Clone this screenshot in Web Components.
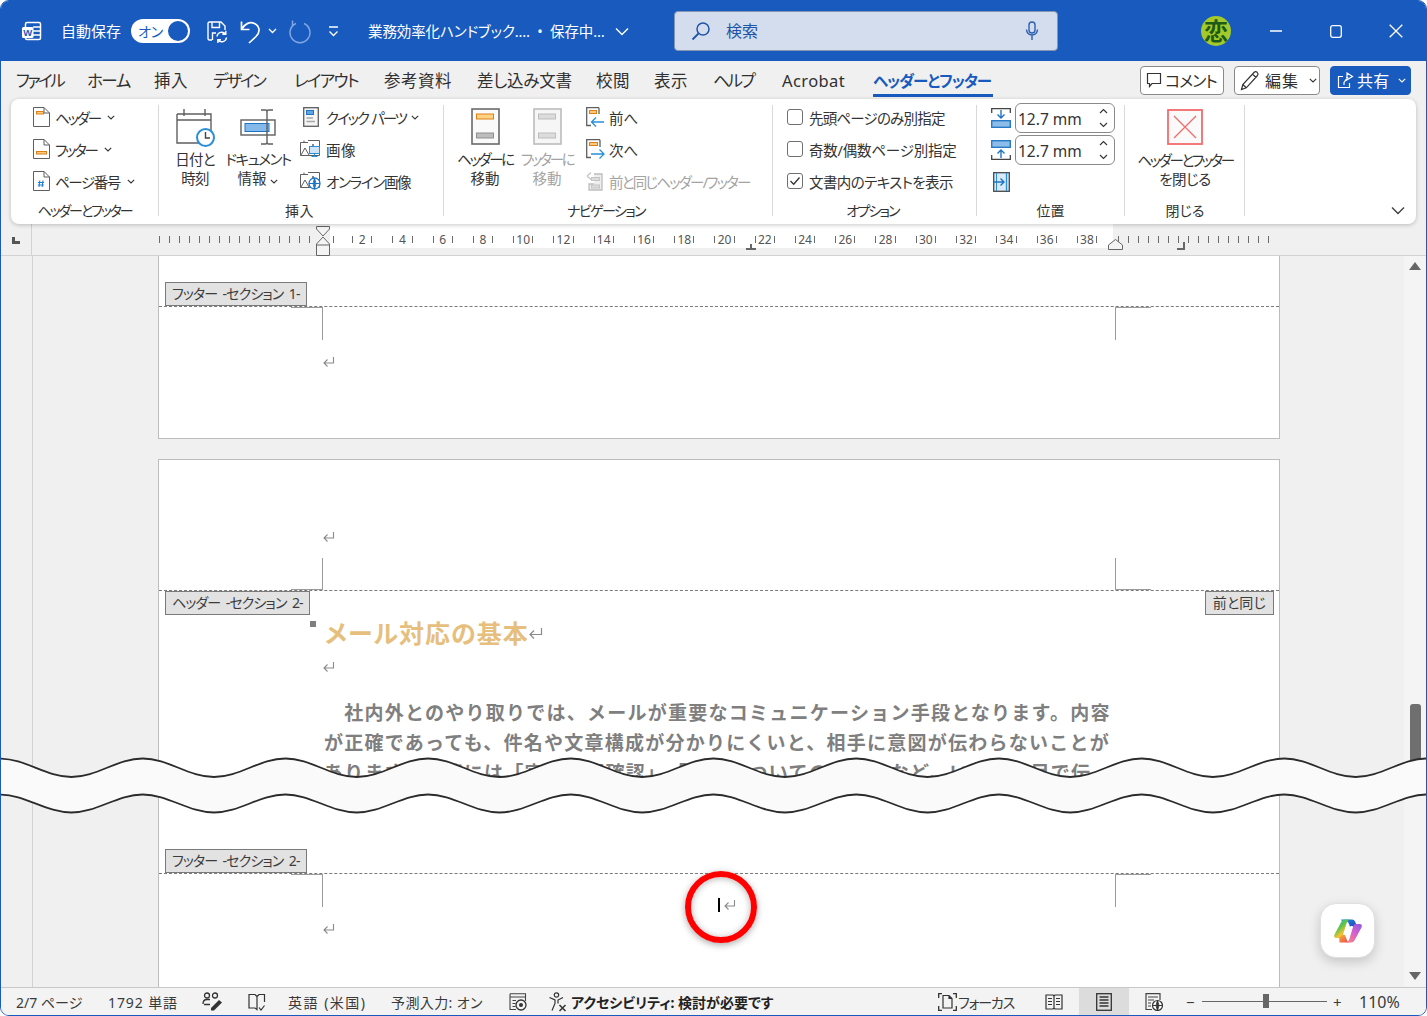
<!DOCTYPE html>
<html lang="ja">
<head>
<meta charset="utf-8">
<title>Word</title>
<style>
  html, body { margin: 0; padding: 0; background: #fff; }
  body { font-family: "Noto Sans", "Noto Sans CJK JP", sans-serif; font-feature-settings: "palt"; }
</style>
</head>
<body>
<word-app></word-app>

<script>
const GR = '#5f5f5f';
const pageShape = (s, f) => `<path d="M.5.5H11L16.5 6V19.5H.5Z" fill="${f}" stroke="${s}"/><path d="M11 .5V6H16.5" fill="none" stroke="${s}"/>`;
const frame = `<path d="M8 .5H19.5V15.5H.5V2.5M.5 2.5H8M4 .5V2" fill="#fff" stroke="${GR}"/><path d="M1 15L5 8L9 15" fill="none" stroke="${GR}"/><circle cx="13" cy="5" r="1" fill="${GR}"/>`;

// every icon is [width, height, svg content]
const ICONS = {
  word: [24, 24, `<path d="M8 3.5H20a1.5 1.5 0 0 1 1.500 1.500V19a1.500 1.500 0 0 1-1.500 1.500H8a1.500 1.500 0 0 1-1.500-1.500V5A1.500 1.500 0 0 1 8 3.500Z" fill="none" stroke="#fff" stroke-width="1.500"/><path d="M14 8H21M14 12H21M14 16H21" stroke="#fff" stroke-width="1.300"/><rect x="3" y="8" width="11.500" height="11" rx="1.500" fill="#fff"/><text x="8.700" y="17" font-size="9.500" font-weight="700" font-family="Liberation Sans" text-anchor="middle" fill="#185abd">W</text>`],
  save: [23, 24, `<path d="M7 21H4.500A1.500 1.500 0 0 1 3 19.500V4.500A1.500 1.500 0 0 1 4.500 3H16L20 7V11" fill="none" stroke="#fff" stroke-width="1.400"/><path d="M7 3V8.500H14.500V3M7.500 21V14H11" fill="none" stroke="#fff" stroke-width="1.400"/><path d="M12 17.500A4.800 4.800 0 0 1 20.500 15M21.500 18.500A4.800 4.800 0 0 1 13 21M20.800 11.800V15.300H17.300M12.800 24V20.700H16" fill="none" stroke="#fff" stroke-width="1.400"/>`],
  undo: [21, 25, `<path d="M1.500 2.500V10.500H9.500M1.800 10C5 4.500 10 2.300 14.500 4.500C20 7.500 20.500 13 16 17.500L9 24" fill="none" stroke="#fff" stroke-width="1.700"/>`],
  redo: [22, 25, `<path d="M7 4.500A10 10 0 1 0 15 4.500M3.500 1.500V7" fill="none" stroke="#82a6e2" stroke-width="1.500"/>`],
  custom: [11, 12, `<path d="M1 2H10M1.500 6.500L5.500 10.500L9.500 6.500" fill="none" stroke="#fff" stroke-width="1.300"/>`],
  chevW: [9, 6, `<path d="M1 1L4.500 4.500L8 1" fill="none" stroke="#fff" stroke-width="1.300"/>`],
  chevTitle: [14, 9, `<path d="M1 1.500L7 7.500L13 1.500" fill="none" stroke="#fff" stroke-width="1.400"/>`],
  glass: [20, 20, `<circle cx="12" cy="8" r="6" fill="none" stroke="#1f55a8" stroke-width="1.500"/><path d="M7.500 12.500L1.500 18.500" stroke="#1f55a8" stroke-width="1.800"/>`],
  mic: [14, 20, `<rect x="4" y="1" width="6" height="11" rx="3" fill="none" stroke="#2d5fae" stroke-width="1.400"/><path d="M1.500 8.500A5.500 5.500 0 0 0 12.500 8.500M7 14V19" fill="none" stroke="#2d5fae" stroke-width="1.400"/>`],
  winMin: [12, 2, `<path d="M0 1H12" stroke="#fff" stroke-width="1.300"/>`],
  winMax: [12, 13, `<rect x=".7" y=".7" width="10.600" height="11.600" rx="2" fill="none" stroke="#fff" stroke-width="1.300"/>`],
  winClose: [14, 14, `<path d="M.7.700L13.300 13.300M13.300.700L.7 13.300" stroke="#fff" stroke-width="1.300"/>`],
  comment: [16, 16, `<path d="M1.500 1.500H14.500V11.500H6L3.500 14.500V11.500H1.500Z" fill="none" stroke="#333" stroke-width="1.200"/>`],
  pencil: [20, 21, `<path d="M1.500 19.500L2.800 14.500L14 2.500Q15.500 1 17.200 2.300Q18.800 4 17.500 5.500L6.300 17.800ZM12.500 4L16 7.500M2.800 14.500L6.300 17.800" fill="none" stroke="#333" stroke-width="1.200"/>`],
  share: [17, 17, `<path d="M6 4.500H1.500V15.500H12.500V11M9 5.500H10.500L7 10.500V13M9 8.500L15.500 4.500L10 1V8.500" fill="none" stroke="#fff" stroke-width="1.200"/>`],
  chevS: [8, 5, `<path d="M.8.800L4 4L7.200.800" fill="none" stroke="#333" stroke-width="1.100"/>`],
  chevSW: [8, 5, `<path d="M.8.800L4 4L7.200.800" fill="none" stroke="#fff" stroke-width="1.100"/>`],
  hdr: [17, 20, pageShape(GR, '#fff') + `<rect x="3.500" y="4.500" width="7" height="2.500" fill="#f8c981" stroke="#dd7f14"/>`],
  ftr: [17, 20, pageShape(GR, '#fff') + `<rect x="3.500" y="12.500" width="10" height="2.500" fill="#f8c981" stroke="#dd7f14"/>`],
  pgnum: [17, 20, pageShape(GR, '#fff') + `<path d="M6.800 9.500L6 16M10 9.500L9.200 16M5 11.500H11M4.800 14H10.800" stroke="#1f7fd0" stroke-width="1.100" fill="none"/>`],
  cal: [39, 40, `<g transform="translate(0 -2)"><path d="M1 8H35V32M1 8V37H23M1 14H35M8 3V10M29 3V10" fill="none" stroke="${GR}" stroke-width="1.400"/><circle cx="29.500" cy="31.500" r="8.500" fill="#fff" stroke="#2b8fd8" stroke-width="2"/><path d="M29.500 26V32H34" fill="none" stroke="#444" stroke-width="1.400"/></g>`],
  docinfo: [37, 38, `<rect x="1" y="12" width="34" height="15" fill="none" stroke="${GR}" stroke-width="1.400"/><rect x="5" y="15.500" width="24" height="8" fill="#85b9ea" stroke="#1e74c4"/><path d="M21 2H25.500Q27 2 27 4V34Q27 36 25.500 36H21M33 2H28.500Q27 2 27 4M33 36H28.500Q27 36 27 34" fill="none" stroke="${GR}" stroke-width="1.400"/>`],
  quick: [16, 20, `<rect x=".7" y=".7" width="14.600" height="18.600" fill="#f5f5f5" stroke="${GR}" stroke-width="1.300"/><rect x="3.500" y="3.500" width="7" height="4" fill="#5ea6e2" stroke="#1e74c4"/><path d="M3.500 11H10M3.500 14.500H12" stroke="#a8a8a8" stroke-width="1.600"/>`],
  image: [21, 18, frame + `<rect x="9.500" y="6.500" width="10" height="7" fill="#cfe4f7" stroke="#2b8fd8"/><path d="M14.500 13.500V16.500M11.500 16.500H17.500" stroke="#2b8fd8"/>`],
  online: [21, 18, frame + `<circle cx="14.500" cy="11.500" r="5.500" fill="#fff" stroke="#1e74c4" stroke-width="1.300"/><path d="M9 11.500H20M14.500 6V17M14.500 6Q11.500 11.500 14.500 17Q17.500 11.500 14.500 6" fill="none" stroke="#1e74c4"/>`],
  goHdr: [29, 37, `<rect x="1" y="1" width="27" height="35" fill="#fafafa" stroke="#6a6a6a" stroke-width="1.600"/><rect x="5.500" y="6" width="17" height="5" fill="#fdd383" stroke="#de8015"/><rect x="5.500" y="25" width="17" height="5" fill="#bdbdbd" stroke="#8f8f8f"/>`],
  goFtr: [29, 37, `<rect x="1" y="1" width="27" height="35" fill="#f6f6f6" stroke="#bcbcbc" stroke-width="1.600"/><rect x="5.500" y="6" width="17" height="5" fill="#dcdcdc" stroke="#bdbdbd"/><rect x="5.500" y="25" width="17" height="5" fill="#dcdcdc" stroke="#bdbdbd"/>`],
  prev: [19, 20, `<path d="M13 .7H.7V18.500H5M13 .7V7" fill="none" stroke="${GR}" stroke-width="1.300"/><rect x="3.500" y="3.500" width="7" height="3" fill="#f8c981" stroke="#dd7f14"/><path d="M18 15H6M10 10.500L5.500 15L10 19.500" fill="none" stroke="#2b8fd8" stroke-width="1.300"/>`],
  next: [19, 20, `<path d="M14 .7H.7V18.500H5M14 .7V8" fill="none" stroke="${GR}" stroke-width="1.300"/><rect x="3.500" y="3.500" width="8" height="3" fill="#f8c981" stroke="#dd7f14"/><path d="M5 15H17.500M13.500 10.500L18 15L13.500 19.500" fill="none" stroke="#2b8fd8" stroke-width="1.300"/>`],
  same: [17, 20, `<path d="M8 3H16V19H3V13H8" fill="#eee" stroke="#bdbdbd" stroke-width="1.300"/><rect x="5.500" y="6.500" width="8" height="3" fill="#dcdcdc" stroke="#c4c4c4"/><rect x="5.500" y="14" width="8" height="3" fill="#dcdcdc" stroke="#c4c4c4"/><path d="M1 5L5 1.500M1 5L5 8.500" stroke="#c4c4c4" fill="none" stroke-width="1.200"/>`],
  topDist: [20, 20, `<path d="M.7 5V.7H19.300V5" fill="none" stroke="#444" stroke-width="1.300"/><path d="M10 2V10M6.500 6.500L10 10L13.500 6.500" fill="none" stroke="#1e74c4" stroke-width="1.400"/><rect x=".7" y="12.700" width="18.600" height="6.600" fill="#8cbcea" stroke="#1e74c4" stroke-width="1.300"/>`],
  botDist: [20, 20, `<rect x=".7" y=".7" width="18.600" height="6.600" fill="#8cbcea" stroke="#1e74c4" stroke-width="1.300"/><path d="M10 18V10M6.500 13.500L10 10L13.500 13.500" fill="none" stroke="#1e74c4" stroke-width="1.400"/><path d="M.7 15V19.300H19.300V15" fill="none" stroke="#444" stroke-width="1.300"/>`],
  alignTab: [17, 20, `<rect x=".7" y=".7" width="15.600" height="18.600" fill="#d9e9f8" stroke="#4a4a4a" stroke-width="1.300"/><path d="M3.500 1V19" stroke="#2b8fd8"/><path d="M13.500 1V19" stroke="#2b8fd8" stroke-width="1.300"/><path d="M1 10H11M7.500 6.500L11 10L7.500 13.500" fill="none" stroke="#1e74c4" stroke-width="1.400"/>`],
  closeX: [36, 36, `<rect x="1" y="1" width="34" height="34" fill="#fafafa" stroke="#f26c6c" stroke-width="1.800"/><path d="M7 7L29 29M29 7L7 29" stroke="#f26c6c" stroke-width="1.300"/>`],
  check: [12, 10, `<path d="M1.500 5L4.700 8.200L10.500 1.500" fill="none" stroke="#333" stroke-width="1.300"/>`],
  spinUp: [9, 6, `<path d="M1 5L4.500 1.500L8 5" fill="none" stroke="#333" stroke-width="1.100"/>`],
  spinDown: [9, 6, `<path d="M1 1L4.500 4.500L8 1" fill="none" stroke="#333" stroke-width="1.100"/>`],
  ret: [13, 12, `<path d="M11.500 1V7H2M5.500 3.500L2 7L5.500 10.500" fill="none" stroke="#8a8a8a" stroke-width="1.100"/>`],
  retBig: [15, 13, `<path d="M13.500 1V7.500H2M6 3.500L2 7.500L6 11.500" fill="none" stroke="#8a8a8a" stroke-width="1.200"/>`],
  proof: [21, 19, `<circle cx="5" cy="3.500" r="2.500" fill="none" stroke="#333" stroke-width="1.300"/><circle cx="13" cy="3.500" r="2.500" fill="none" stroke="#333" stroke-width="1.300"/><path d="M1 12Q1 7.500 5 7.500H8M2 12.500H8" fill="none" stroke="#333" stroke-width="1.300"/><path d="M9 16L17 8L20 10.500L12 18.500H9Z" fill="#333"/>`],
  book: [18, 18, `<path d="M1 1.500H7L9 3.500V16.500L7 15H1ZM9 3.500L11 1.500H16.500V9M11 14.500L13 17L16.500 12.500" fill="none" stroke="#333" stroke-width="1.200"/>`],
  macro: [18, 18, `<path d="M1 .7H16.500V8M1 .7V16.500H7M1 4H16.500M3.500 7.500H7M3.500 10.500H6.500M3.500 13.500H6.500" fill="none" stroke="#444" stroke-width="1.100"/><circle cx="12" cy="12" r="5" fill="none" stroke="#333" stroke-width="1.300"/><circle cx="12" cy="12" r="2" fill="#333"/>`],
  access: [20, 20, `<circle cx="8.500" cy="3" r="2.200" fill="none" stroke="#333" stroke-width="1.200"/><path d="M1.500 5.500L7 8V11.500L4 18.500M15 5.500L10 8V11.500" fill="none" stroke="#333" stroke-width="1.200"/><path d="M11.500 13L17.500 19M17.500 13L11.500 19" stroke="#333" stroke-width="1.500"/>`],
  focus: [19, 18, `<path d="M.7 5V.7H4M15 .7H18.300V5M.7 13V17.300H4M15 17.300H18.300V13" fill="none" stroke="#333" stroke-width="1.300"/><path d="M5 2.500H11L14 5.500V15H5ZM11 2.500V5.500H14" fill="none" stroke="#333" stroke-width="1.200"/>`],
  read: [18, 16, `<path d="M1 1H8L9 2L10 1H17V15H10L9 14L8 15H1ZM9 2V14M3 4.500H7M3 7.500H7M3 10.500H7M11 4.500H15M11 7.500H15M11 10.500H15" fill="none" stroke="#333" stroke-width="1.200"/>`],
  print: [16, 18, `<rect x=".7" y=".7" width="14.600" height="16.600" fill="none" stroke="#333" stroke-width="1.300"/><path d="M3.500 4H12.500M3.500 7H12.500M3.500 10H12.500M3.500 13H12.500" stroke="#333" stroke-width="1.300"/>`],
  web: [18, 18, `<path d="M7 16.500H1V.7H15V7M3 4H13M3 7H9M3 10H6M3 13H6" fill="none" stroke="#444" stroke-width="1.200"/><circle cx="12.500" cy="12.500" r="5" fill="#fff" stroke="#333" stroke-width="1.200"/><path d="M7.500 12.500H17.500M12.500 7.500V17.500M12.500 7.500Q9.500 12.500 12.500 17.500Q15.500 12.500 12.500 7.500" fill="none" stroke="#333"/>`],
  copilot: [30, 28, `<defs>
    <linearGradient id="cl" x1="0" y1="0" x2=".7" y2="1"><stop offset="0" stop-color="#1fb6c9"/><stop offset=".45" stop-color="#5fc24a"/><stop offset=".75" stop-color="#f4c534"/><stop offset="1" stop-color="#f0643c"/></linearGradient>
    <linearGradient id="cr" x1="1" y1="0" x2=".2" y2="1"><stop offset="0" stop-color="#8a5ae0"/><stop offset=".5" stop-color="#d25fd0"/><stop offset="1" stop-color="#f7808a"/></linearGradient>
    <linearGradient id="ct" x1="0" y1="0" x2="1" y2="1"><stop offset="0" stop-color="#1b8fe0"/><stop offset="1" stop-color="#2a3fc0"/></linearGradient>
    <linearGradient id="cb" x1="0" y1="0" x2="1" y2="1"><stop offset="0" stop-color="#f7b12e"/><stop offset="1" stop-color="#e8455a"/></linearGradient>
  </defs>
  <path d="M8 2.500H19Q21.500 2.500 22.500 5.500L24 10H17Q15.500 4 13 4Q11 4 10.300 6.500Z" fill="url(#ct)"/>
  <path d="M6.500 25.500H17Q14.500 25.500 13.600 22L12 18H6Z" fill="url(#cb)"/>
  <path d="M8.500 4.500Q9.500 2.500 12 2.500H17Q14.500 3 13.500 6.500L9.700 19Q9 21 7 21H3.500Q.5 21 1.300 18Z" fill="url(#cl)"/>
  <path d="M21.500 23.500Q20.500 25.500 18 25.500H13Q15.500 25 16.500 21.500L20.300 9Q21 7 23 7H26.500Q29.500 7 28.700 10Z" fill="url(#cr)"/>
  <path d="M17.500 9H20L15.500 20H12.500Z" fill="#fff"/>`]
};

class AppIcon extends HTMLElement {
  connectedCallback() {
    const [w, h, body] = ICONS[this.getAttribute('name')];
    this.attachShadow({ mode: 'open' });
    this.shadowRoot.innerHTML = `
      <style>:host { display: inline-flex; flex: none; line-height: 0; } svg { display: block; }</style>
      <svg width="${w}" height="${h}" viewBox="0 0 ${w} ${h}">${body}</svg>`;
  }
}

class TitleBar extends HTMLElement {
  connectedCallback() {
    this.attachShadow({ mode: 'open' });
    this.shadowRoot.innerHTML = `
      <style>
        :host { display: flex; align-items: center; height: 60px; background: #185abd; color: #fff; font-size: 15px; padding-left: 18px; flex: none; white-space: nowrap; }
        .auto { margin-left: 18px; width: 60px; padding-bottom: 2px; }
        .toggle { margin-left: 10px; width: 59px; height: 24px; border-radius: 12px; background: #fff; box-sizing: border-box; padding: 0 2px 0 7px; display: flex; align-items: center; justify-content: space-between; color: #185abd; font-size: 14px; }
        .dot { width: 20px; height: 20px; border-radius: 50%; background: #185abd; }
        .title { margin-left: 29px; width: 242px; font-size: 14.5px; letter-spacing: -.1px; padding-bottom: 2px; }
        .search { margin-left: 45px; width: 384px; height: 40px; box-sizing: border-box; background: #d3dded; border: 1px solid #8596b2; border-radius: 4px; display: flex; align-items: center; padding: 0 18px 0 16px; color: #1f55a8; font-size: 16px; }
        .search span { margin-left: 15px; flex: 1; padding-bottom: 2px; }
        .avatar { margin-left: 143px; width: 30px; height: 30px; border-radius: 50%; background: #a3c92a; color: #1c5a18; font-size: 24px; font-weight: 700; line-height: 29px; text-align: center; }
        .win { width: 60px; height: 40px; display: flex; align-items: center; justify-content: center; }
      </style>
      <app-icon name="word"></app-icon>
      <span class="auto">自動保存</span>
      <div class="toggle">オン<div class="dot"></div></div>
      <app-icon name="save" style="margin-left:15px"></app-icon>
      <app-icon name="undo" style="margin-left:12px"></app-icon>
      <app-icon name="chevW" style="margin-left:7px"></app-icon>
      <app-icon name="redo" style="margin-left:12px"></app-icon>
      <app-icon name="custom" style="margin-left:17px"></app-icon>
      <span class="title">業務効率化ハンドブック.… &nbsp;•&nbsp; 保存中…</span>
      <app-icon name="chevTitle" style="margin-left:5px"></app-icon>
      <div class="search"><app-icon name="glass"></app-icon><span>検索</span><app-icon name="mic"></app-icon></div>
      <div class="avatar">恋</div>
      <div class="win" style="margin-left:15px"><app-icon name="winMin"></app-icon></div>
      <div class="win"><app-icon name="winMax"></app-icon></div>
      <div class="win"><app-icon name="winClose"></app-icon></div>`;
  }
}

class TabStrip extends HTMLElement {
  connectedCallback() {
    const tabs = [['ファイル', 71, -2.500], ['ホーム', 67, -1.500], ['挿入', 59, .4], ['デザイン', 81, -2.200], ['レイアウト', 90, -1.600], ['参考資料', 93, .5], ['差し込み文書', 119, -.2], ['校閲', 58, .5], ['表示', 59, .5], ['ヘルプ', 69, -2.200], ['Acrobat', 91, .4]];
    this.attachShadow({ mode: 'open' });
    this.shadowRoot.innerHTML = `
      <style>
        :host { display: flex; align-items: center; height: 38px; background: #f0f0f0; color: #303030; font-size: 16.500px; padding-left: 15px; flex: none; white-space: nowrap; box-sizing: border-box; }
        .tab { flex: none; }
        .active { width: 120px; color: #185abd; font-weight: 700; font-size: 15.500px; letter-spacing: -1px; height: 33px; line-height: 35px; box-sizing: border-box; border-bottom: 3px solid #185abd; }
        .btn { height: 29px; box-sizing: border-box; border: 1px solid #8a8a8a; border-radius: 4px; background: #fff; display: flex; align-items: center; font-size: 16px; }
        .comment { margin-left: 147px; width: 84px; padding-left: 5px; gap: 3px; letter-spacing: -1px; }
        .edit { margin-left: 10px; width: 86px; padding-left: 5px; gap: 5px; letter-spacing: 1px; }
        .share { margin-left: 10px; width: 81px; padding-left: 6px; gap: 3px; background: #185abd; border-color: #185abd; color: #fff; letter-spacing: .3px; }
        .edit app-icon:last-child, .share app-icon:last-child { margin-left: 5px; }
      </style>
      ${tabs.map(([t, w, ls]) => `<span class="tab" style="width:${w}px;letter-spacing:${ls}px">${t}</span>`).join('')}
      <span class="tab active">ヘッダーとフッター</span>
      <div class="btn comment"><app-icon name="comment"></app-icon>コメント</div>
      <div class="btn edit"><app-icon name="pencil"></app-icon>編集<app-icon name="chevS"></app-icon></div>
      <div class="btn share"><app-icon name="share"></app-icon>共有<app-icon name="chevSW"></app-icon></div>`;
  }
}

class RibbonGroup extends HTMLElement {
  connectedCallback() {
    this.attachShadow({ mode: 'open' });
    this.shadowRoot.innerHTML = `
      <style>
        :host { display: grid; grid-template-rows: 93px 18px; flex: none; box-sizing: border-box; height: 111px; border-right: 1px solid #d9d9d9; }
        .body { margin-top: -4px; display: flex; height: 97px; }
        .label { height: 26px; line-height: 26px; text-align: center; font-size: 14px; color: #333; letter-spacing: ${this.getAttribute('ls') || 0}px; padding-right: ${this.getAttribute('shift') || 0}px; }
      </style>
      <div class="body"><slot></slot></div>
      <div class="label">${this.getAttribute('label')}</div>`;
  }
}

class SmallBtn extends HTMLElement {
  connectedCallback() {
    const off = this.hasAttribute('disabled');
    const gap = this.getAttribute('gap') || 5;
    const chev = this.hasAttribute('chev') ? `<app-icon name="chevS" style="margin-left:${this.getAttribute('chev') || 7}px"></app-icon>` : '';
    this.attachShadow({ mode: 'open' });
    this.shadowRoot.innerHTML = `
      <style>
        :host { display: flex; align-items: center; height: 32px; white-space: nowrap; font-size: 14.500px; color: ${off ? '#a3a3a3' : '#333'}; }
        .txt { margin-left: ${gap}px; }
      </style>
      <app-icon name="${this.getAttribute('icon')}"></app-icon><span class="txt"><slot></slot></span>${chev}`;
  }
}

class LargeBtn extends HTMLElement {
  connectedCallback() {
    const off = this.hasAttribute('disabled');
    this.attachShadow({ mode: 'open' });
    this.shadowRoot.innerHTML = `
      <style>
        :host { display: flex; flex-direction: column; align-items: center; flex: none; white-space: nowrap; font-size: 14.500px; line-height: 19px; text-align: center; color: ${off ? '#a3a3a3' : '#333'}; }
        .ico { height: 49px; padding-top: 7px; box-sizing: border-box; display: flex; justify-content: center; }
      </style>
      <div class="ico"><app-icon name="${this.getAttribute('icon')}"></app-icon></div>
      <slot></slot>`;
  }
}

class CheckRow extends HTMLElement {
  connectedCallback() {
    this.attachShadow({ mode: 'open' });
    this.shadowRoot.innerHTML = `
      <style>
        :host { display: flex; align-items: center; height: 32px; white-space: nowrap; font-size: 14.500px; color: #333; }
        .box { width: 16px; height: 16px; box-sizing: border-box; border: 1px solid #707070; border-radius: 3px; margin-right: 6px; display: flex; align-items: center; justify-content: center; }
      </style>
      <div class="box">${this.hasAttribute('checked') ? '<app-icon name="check"></app-icon>' : ''}</div><slot></slot>`;
  }
}

class SpinBox extends HTMLElement {
  connectedCallback() {
    this.attachShadow({ mode: 'open' });
    this.shadowRoot.innerHTML = `
      <style>
        :host { display: flex; align-items: center; width: 100px; height: 30px; box-sizing: border-box; margin-left: 4px; border: 1px solid #8a8a8a; border-radius: 6px; font-size: 15.500px; color: #333; padding: 0 6px 0 2px; justify-content: space-between; }
        span { padding-top: 1px; }
        .arrows { display: flex; flex-direction: column; gap: 8px; }
      </style>
      <span>12.7 mm</span>
      <div class="arrows"><app-icon name="spinUp"></app-icon><app-icon name="spinDown"></app-icon></div>`;
  }
}

class RibbonBar extends HTMLElement {
  connectedCallback() {
    this.attachShadow({ mode: 'open' });
    this.shadowRoot.innerHTML = `
      <style>
        :host { display: flex; flex: none; position: relative; z-index: 2; height: 125px; box-sizing: border-box; margin: 0 10px; background: #fff; border-radius: 8px; padding: 6px 0 8px; box-shadow: 0 1px 4px rgba(0,0,0,.22); }
        .col { display: flex; flex-direction: column; }
        .more { margin-left: auto; align-self: flex-end; margin-right: 11px; margin-bottom: 1px; }
        .row { display: flex; align-items: center; height: 32px; }
      </style>
      <ribbon-group label="ヘッダーとフッター" ls="-2.100" style="width:148px">
        <div class="col" style="padding-left:22px">
          <small-btn icon="hdr" chev style="letter-spacing:-2.200px">ヘッダー</small-btn>
          <small-btn icon="ftr" chev style="letter-spacing:-2.200px">フッター</small-btn>
          <small-btn icon="pgnum" chev style="letter-spacing:-1.400px">ページ番号</small-btn>
        </div>
      </ribbon-group>
      <ribbon-group label="挿入" ls=".5" shift="3" style="width:285px">
        <large-btn icon="cal" style="width:40px;margin-left:16px;letter-spacing:-.8px"><span>日付と<br>時刻</span></large-btn>
        <large-btn icon="docinfo" style="width:70px;margin-left:8px;letter-spacing:-1.500px"><span>ドキュメント<br><span style="letter-spacing:0">情報 <app-icon name="chevS"></app-icon></span></span></large-btn>
        <div class="col" style="margin-left:7px">
          <small-btn icon="quick" gap="7" chev="5" style="margin-left:3px;letter-spacing:-2.100px">クイック&nbsp; パーツ</small-btn>
          <small-btn icon="image" gap="5" style="letter-spacing:.5px">画像</small-btn>
          <small-btn icon="online" gap="5" style="letter-spacing:-1.300px">オンライン画像</small-btn>
        </div>
      </ribbon-group>
      <ribbon-group label="ナビゲーション" ls="-1.600" shift="4" style="width:329px">
        <large-btn icon="goHdr" style="width:60px;margin-left:11px;letter-spacing:-2.400px"><span>ヘッダーに<br><span style="letter-spacing:0">移動</span></span></large-btn>
        <large-btn icon="goFtr" disabled style="width:60px;margin-left:2px;letter-spacing:-2.400px"><span>フッターに<br><span style="letter-spacing:0">移動</span></span></large-btn>
        <div class="col" style="margin-left:9px">
          <small-btn icon="prev" gap="4">前へ</small-btn>
          <small-btn icon="next" gap="4">次へ</small-btn>
          <small-btn icon="same" disabled gap="6" style="letter-spacing:-1.800px">前と同じヘッダー/フッター</small-btn>
        </div>
      </ribbon-group>
      <ribbon-group label="オプション" ls="-1.800" shift="4" style="width:204px">
        <div class="col" style="padding-left:14px">
          <check-row style="letter-spacing:-.8px">先頭ページのみ別指定</check-row>
          <check-row style="letter-spacing:-.2px">奇数/偶数ページ別指定</check-row>
          <check-row checked style="letter-spacing:-.6px">文書内のテキストを表示</check-row>
        </div>
      </ribbon-group>
      <ribbon-group label="位置" style="width:148px">
        <div class="col" style="padding-left:14px;margin-top:1px">
          <div class="row"><app-icon name="topDist"></app-icon><spin-box></spin-box></div>
          <div class="row"><app-icon name="botDist"></app-icon><spin-box></spin-box></div>
          <div class="row"><app-icon name="alignTab" style="margin-left:2px"></app-icon></div>
        </div>
      </ribbon-group>
      <ribbon-group label="閉じる" style="width:120px">
        <large-btn icon="closeX" style="width:120px;padding-top:1px;letter-spacing:-2.400px"><span>ヘッダーとフッター<br><span style="letter-spacing:-.5px">を閉じる</span></span></large-btn>
      </ribbon-group>
      <app-icon name="chevTitle" class="more" style="filter:brightness(.25)"></app-icon>`;
  }
}

class DocRuler extends HTMLElement {
  connectedCallback() {
    let cells = '';
    for (let n = 2; n <= 38; n += 2) cells += `<div class="cell"><i></i><span>${n}</span><i></i></div>`;
    this.attachShadow({ mode: 'open' });
    this.shadowRoot.innerHTML = `
      <style>
        :host { display: flex; flex: none; height: 32px; box-sizing: border-box; background: #f0f0f0; border-bottom: 1px solid #d2d2d2; position: relative; }
        .corner { width: 31px; border-right: 1px solid #d2d2d2; display: flex; align-items: center; padding-left: 11px; box-sizing: border-box; }
        .el { width: 8px; height: 7px; border-left: 3px solid #555; border-bottom: 3px solid #555; box-sizing: border-box; margin-top: 1px; }
        .ticks { height: 7px; margin-top: 12px; background: repeating-linear-gradient(90deg, #6a6a6a 0 1px, transparent 1px 10px); }
        .left { margin-left: 127px; width: 157px; }
        .band { width: 783px; margin-left: 14px; height: 24px; background: #fff; display: flex; align-items: flex-start; padding-left: 3px; box-sizing: border-box; font-size: 12px; color: #555; }
        .band > i { flex: none; margin-right: 8px; }
        i { display: block; width: 1px; height: 7px; background: #6a6a6a; margin-top: 12px; }
        .cell { flex: none; width: 40.270px; box-sizing: border-box; padding: 0 10px; display: flex; justify-content: space-between; }
        .cell span { width: 0; display: flex; justify-content: center; margin-top: 7px; line-height: 17px; }
        .right { margin-left: 5px; width: 153px; }
        .mark { position: absolute; }
      </style>
      <div class="corner"><div class="el"></div></div>
      <div class="ticks left"></div>
      <div class="band"><i></i>${cells}</div>
      <div class="ticks right"></div>
      <svg class="mark" style="left:315px;top:1px" width="14" height="31" viewBox="0 0 14 31"><path d="M.5 1.500H13.500V4L7 11L.5 4ZM7 12L13.500 19V30.500H.5V19ZM.5 20H13.500" fill="#f4f4f4" stroke="#666"/></svg>
      <svg class="mark" style="left:1107px;top:15px" width="15" height="11" viewBox="0 0 15 11"><path d="M.5 10.500V6L7.500 .5L14.500 6V10.500Z" fill="#f4f4f4" stroke="#666"/></svg>
      <svg class="mark" style="left:745px;top:20px" width="10" height="6" viewBox="0 0 10 6"><path d="M5 0V4M0 5H10" stroke="#666" stroke-width="2"/></svg>
      <svg class="mark" style="left:1176px;top:18px" width="8" height="8" viewBox="0 0 8 8"><path d="M7 0V7H0" fill="none" stroke="#666" stroke-width="2"/></svg>`;
  }
}

class HfTag extends HTMLElement {
  connectedCallback() {
    this.attachShadow({ mode: 'open' });
    this.shadowRoot.innerHTML = `<style>
        :host { display: block; height: 24px; box-sizing: border-box; border: 1px solid #7a7a7a; background: #e2e2e2; padding: 0 6px; line-height: 21px; font-size: 14px; color: #3c3c3c; white-space: nowrap; flex: none; width: max-content; letter-spacing: -.9px; }
      </style><slot></slot>`;
  }
}

class CropRow extends HTMLElement {
  connectedCallback() {
    this.attachShadow({ mode: 'open' });
    this.shadowRoot.innerHTML = `
      <style>
        :host { display: block; box-sizing: border-box; margin: 0 163px; width: 794px; height: ${this.getAttribute('h') || 33}px; border-left: 1px solid #9a9a9a; border-right: 1px solid #9a9a9a; position: relative; }
        .lead, .tail { position: absolute; height: 1px; background: #9a9a9a; ${this.hasAttribute('top') ? 'top: 0' : 'bottom: 0'}; }
        .lead { left: -32px; width: 32px; }
        .tail { left: 793px; width: 35px; }
      </style>
      <div class="lead"></div><div class="tail"></div><slot></slot>`;
  }
}

class DocView extends HTMLElement {
  connectedCallback() {
    this.attachShadow({ mode: 'open' });
    this.shadowRoot.innerHTML = `
      <style>
        :host { display: flex; flex: 1; min-height: 0; overflow: hidden; background: #f0f0f0; }
        .rail { width: 32px; flex: none; box-sizing: border-box; border-right: 1px solid #d2d2d2; }
        .gutter { width: 125px; flex: none; }
        .pages { width: 1122px; flex: none; }
        .page { background: #fff; border: 1px solid #bcbcbc; box-sizing: border-box; }
        .p1 { height: 183px; border-top: 0; margin-bottom: 20px; padding-top: 26px; }
        .p2 { height: 640px; padding-top: 71px; }
        .tagrow { margin: 0 5px 0 6px; display: flex; justify-content: space-between; }
        .dash { border-top: 1px dashed #7a7a7a; }
        .title { position: relative; margin: 0 0 0 166px; height: 36px; line-height: 36px; font-size: 25px; font-weight: 700; color: #e6bf7f; display: flex; align-items: center; letter-spacing: 1.050px; }
        .anchor { position: absolute; left: -15px; top: 6px; width: 6px; height: 6px; background: #7f7f7f; }
        .body { margin: 25px 0 0 165px; height: 90px; line-height: 30px; font-size: 19px; font-weight: 700; color: #7f7f7f; letter-spacing: 1.250px; white-space: nowrap; overflow: hidden; font-feature-settings: normal; }
        .cursor { display: flex; align-items: center; padding: 24px 0 0 395px; }
        .cursor b { width: 2px; height: 14px; background: #000; margin-right: 3px; }
        .bar { width: 22px; flex: none; margin-left: 124px; background: #f4f4f4; display: flex; flex-direction: column; align-items: center; position: relative; }
        .up, .down { width: 0; height: 0; border-left: 6px solid transparent; border-right: 6px solid transparent; }
        .up { border-bottom: 8px solid #666; margin-top: 6px; }
        .down { border-top: 8px solid #666; margin-top: auto; margin-bottom: 7px; }
        .thumb { width: 11px; height: 80px; background: #6f6f6f; border-radius: 3px; margin-top: 434px; }
      </style>
      <div class="rail"></div>
      <div class="gutter"></div>
      <div class="pages">
        <div class="page p1">
          <div class="tagrow"><hf-tag>フッター &nbsp;-セクション &nbsp;1-</hf-tag></div>
          <div class="dash"></div>
          <crop-row top h="33"></crop-row>
          <app-icon name="ret" style="margin-top:16px;margin-left:163px;display:block;width:13px"></app-icon>
        </div>
        <div class="page p2">
          <app-icon name="ret" style="display:block;margin-left:163px;width:13px"></app-icon>
          <crop-row h="32" style="margin-top:15px"></crop-row>
          <div class="dash"></div>
          <div class="tagrow"><hf-tag>ヘッダー &nbsp;-セクション &nbsp;2-</hf-tag><hf-tag style="letter-spacing:.2px;padding:0 7px">前と同じ</hf-tag></div>
          <div class="title"><div class="anchor"></div>メール対応の基本<app-icon name="retBig" style="margin-left:-1px"></app-icon></div>
          <app-icon name="ret" style="display:block;margin-top:10px;margin-left:163px;width:13px"></app-icon>
          <div class="body">　社内外とのやり取りでは、メールが重要なコミュニケーション手段となります。内容<br>が正確であっても、件名や文章構成が分かりにくいと、相手に意図が伝わらないことが<br>あります。実際には「宛先の再確認」、「件名についての工夫」など、いつも一目で伝</div>
          <div class="tagrow" style="margin-top:61px"><hf-tag>フッター &nbsp;-セクション &nbsp;2-</hf-tag></div>
          <div class="dash"></div>
          <crop-row top h="33"><div class="cursor"><b></b><app-icon name="ret"></app-icon></div></crop-row>
          <app-icon name="ret" style="display:block;margin-top:16px;margin-left:163px;width:13px"></app-icon>
        </div>
      </div>
      <div class="bar"><div class="up"></div><div class="thumb"></div><div class="down"></div></div>`;
  }
}

class StatusBar extends HTMLElement {
  connectedCallback() {
    this.attachShadow({ mode: 'open' });
    this.shadowRoot.innerHTML = `
      <style>
        :host { display: flex; align-items: center; flex: none; height: 28px; box-sizing: border-box; background: #f3f3f3; border-top: 1px solid #c8c8c8; font-size: 14px; color: #3a3a3a; white-space: nowrap; padding-left: 15px; }
        .s { flex: none; }
        b { font-weight: 700; color: #222; }
        .view { width: 50px; height: 27px; display: flex; align-items: center; justify-content: center; flex: none; }
        .on { background: #dcdcdc; }
        .slider { width: 125px; height: 1px; background: #666; margin-left: 6px; position: relative; flex: none; }
        .slider i { position: absolute; left: 61px; top: -7px; width: 6px; height: 14px; background: #666; }
      </style>
      <span class="s" style="width:92px">2/7 ページ</span>
      <span class="s" style="width:94px;letter-spacing:.9px">1792 単語</span>
      <app-icon name="proof"></app-icon>
      <app-icon name="book" style="margin-left:25px"></app-icon>
      <span class="s" style="margin-left:22px;width:103px;letter-spacing:1.500px">英語 (米国)</span>
      <span class="s" style="width:118px;letter-spacing:.4px">予測入力: オン</span>
      <app-icon name="macro"></app-icon>
      <app-icon name="access" style="margin-left:21px"></app-icon>
      <b class="s" style="margin-left:3px;width:367px">アクセシビリティ: 検討が必要です</b>
      <app-icon name="focus"></app-icon>
      <span class="s" style="margin-left:1px;width:71px;letter-spacing:-1.200px">フォーカス</span>
      <div class="view"><app-icon name="read"></app-icon></div>
      <div class="view on"><app-icon name="print"></app-icon></div>
      <div class="view"><app-icon name="web"></app-icon></div>
      <span class="s" style="margin-left:7px;width:10px;font-size:15px">−</span>
      <div class="slider"><i></i></div>
      <span class="s" style="margin-left:6px;width:26px;font-size:15px">+</span>
      <span class="s" style="font-size:16px">110%</span>`;
  }
}

class TearWave extends HTMLElement {
  connectedCallback() {
    const half = 142.7 / 2;
    const wave = (top, bottom) => {
      let d = `M-1 ${top}`;
      for (let i = 0; i < 20; i++) {
        const x = i * half, a = i % 2 ? bottom : top, b = i % 2 ? top : bottom;
        d += `C${x + half * .36} ${a} ${x + half * .64} ${b} ${x + half} ${b}`;
      }
      return d;
    };
    const upper = wave(8.5, 27), lower = wave(44.5, 62.5);
    // closed band: upper curve, down the right edge, back along the lower curve
    let back = '';
    for (let i = 19; i >= 0; i--) {
      const x = i * half, a = i % 2 ? 44.5 : 62.5, b = i % 2 ? 62.5 : 44.5;
      back += `C${x + half * .64} ${a} ${x + half * .36} ${b} ${x} ${b}`;
    }
    this.attachShadow({ mode: 'open' });
    this.shadowRoot.innerHTML = `
      <style>:host { display: block; position: absolute; left: -1px; top: 749px; width: 1427px; height: 72px; z-index: 3; pointer-events: none; } svg { display: block; }</style>
      <svg width="1427" height="72" viewBox="0 0 1427 72">
        <path d="${upper}L1427 44.500${back}Z" fill="#fafafa"/>
        <path d="${upper}" fill="none" stroke="#2b2b2b" stroke-width="1.800"/>
        <path d="${lower}" fill="none" stroke="#2b2b2b" stroke-width="1.800"/>
      </svg>`;
  }
}

class WordApp extends HTMLElement {
  connectedCallback() {
    this.attachShadow({ mode: 'open' });
    this.shadowRoot.innerHTML = `
      <style>
        :host { display: flex; flex-direction: column; box-sizing: border-box; width: 1427px; height: 1016px; border: 1px solid #185abd; border-radius: 9px; overflow: hidden; position: relative; background: #f0f0f0; }
        .ring { position: absolute; left: 684px; top: 870px; width: 72px; height: 72px; box-sizing: border-box; border: 6px solid #f00; border-radius: 50%; box-shadow: 0 2px 7px rgba(0,0,0,.35), inset 0 1px 7px rgba(0,0,0,.3); z-index: 4; }
        .copilot { position: absolute; left: 1319px; top: 902px; width: 55px; height: 55px; background: #fff; border-radius: 16px; border: 1px solid #e0e0e0; box-sizing: border-box; box-shadow: 0 4px 12px rgba(0,0,0,.18); display: flex; align-items: center; justify-content: center; z-index: 4; }
      </style>
      <title-bar></title-bar>
      <tab-strip></tab-strip>
      <ribbon-bar></ribbon-bar>
      <doc-ruler></doc-ruler>
      <doc-view></doc-view>
      <status-bar></status-bar>
      <tear-wave></tear-wave>
      <div class="ring"></div>
      <div class="copilot"><app-icon name="copilot"></app-icon></div>`;
  }
}

customElements.define('app-icon', AppIcon);
customElements.define('title-bar', TitleBar);
customElements.define('tab-strip', TabStrip);
customElements.define('ribbon-group', RibbonGroup);
customElements.define('small-btn', SmallBtn);
customElements.define('large-btn', LargeBtn);
customElements.define('check-row', CheckRow);
customElements.define('spin-box', SpinBox);
customElements.define('ribbon-bar', RibbonBar);
customElements.define('doc-ruler', DocRuler);
customElements.define('hf-tag', HfTag);
customElements.define('crop-row', CropRow);
customElements.define('doc-view', DocView);
customElements.define('status-bar', StatusBar);
customElements.define('tear-wave', TearWave);
customElements.define('word-app', WordApp);
</script>
</body>
</html>
